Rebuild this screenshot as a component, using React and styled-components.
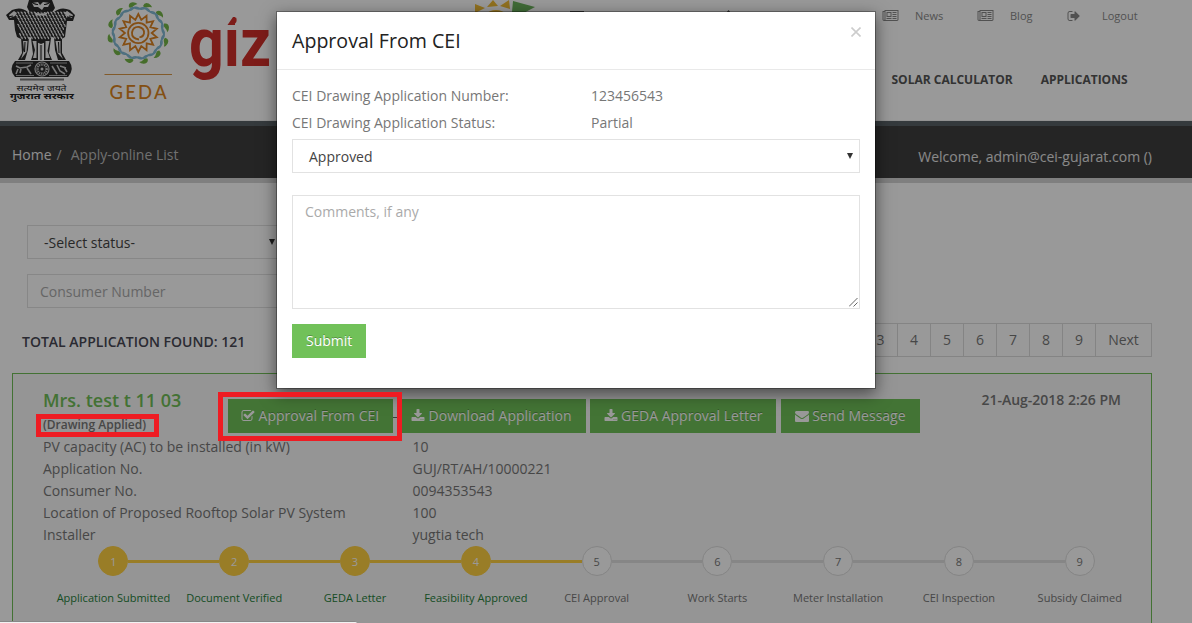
import React from "react";
import styled, { createGlobalStyle } from "styled-components";

const GlobalStyle = createGlobalStyle`
  * { box-sizing: border-box; }
  html, body { margin: 0; padding: 0; height: 100%; overflow: hidden; }
  body { font: 14px/22px "Open Sans", "Noto Sans", sans-serif; color: #777; background: #fff; }
`;

const ICONS = {
  download: ["0 0 1792 1792", "M1344 1344q0-26-19-45t-45-19-45 19-19 45 19 45 45 19 45-19 19-45zm256 0q0-26-19-45t-45-19-45 19-19 45 19 45 45 19 45-19 19-45zm128-224v320q0 40-28 68t-68 28h-1472q-40 0-68-28t-28-68v-320q0-40 28-68t68-28h465l135 136q58 56 136 56t136-56l136-136h464q40 0 68 28t28 68zm-325-569q17 41-14 70l-448 448q-18 19-45 19t-45-19l-448-448q-31-29-14-70 17-39 59-39h256v-448q0-26 19-45t45-19h256q26 0 45 19t19 45v448h256q42 0 59 39z"],
  check: ["0 0 1792 1792", "M1472 930v318q0 119-84.5 203.5t-203.5 84.5h-832q-119 0-203.5-84.5t-84.5-203.5v-832q0-119 84.5-203.5t203.5-84.5h832q63 0 117 25 15 7 18 23 3 17-9 29l-49 49q-10 10-23 10-3 0-9-2-23-6-45-6h-832q-66 0-113 47t-47 113v832q0 66 47 113t113 47h832q66 0 113-47t47-113v-254q0-13 9-22l64-64q10-10 23-10 6 0 12 3 20 8 20 29zm231-489l-814 814q-24 24-57 24t-57-24l-430-430q-24-24-24-57t24-57l110-110q24-24 57-24t57 24l263 263 647-647q24-24 57-24t57 24l110 110q24 24 24 57t-24 57z"],
  envelope: ["0 0 1792 1792", "M1792 710v794q0 66-47 113t-113 47h-1472q-66 0-113-47t-47-113v-794q44 49 101 87 362 246 497 345 57 42 92.5 65.5t94.5 48 110 24.5h2q51 0 110-24.5t94.5-48 92.5-65.5q170-123 498-345 57-39 100-87zm0-294q0 79-49 151t-122 123q-376 261-468 325-10 7-42.5 31t-54 38.5-52 32.5-57.5 27-50 9h-2q-23 0-50-9t-57.5-27-52-32.5-54-38.5-42.5-31q-91-64-262-182.5t-205-142.5q-62-42-117-115.5t-55-136.5q0-78 41.5-130t118.5-52h1472q65 0 112.5 47t47.5 113z"],
  signout: ["0 0 1792 1792", "M704 1440q0 4 1 20t.5 26.5-3 23.5-10 19.5-20.5 6.5h-320q-119 0-203.5-84.5t-84.5-203.5v-704q0-119 84.5-203.5t203.5-84.5h320q13 0 22.5 9.5t9.5 22.5q0 4 1 20t.5 26.5-3 23.5-10 19.5-20.5 6.5h-320q-66 0-113 47t-47 113v704q0 66 47 113t113 47h312l11.5 1 11.5 3 8 5.5 7 9 2 13.5zm928-544q0 26-19 45l-544 544q-19 19-45 19t-45-19-19-45v-288h-448q-26 0-45-19t-19-45v-384q0-26 19-45t45-19h448v-288q0-26 19-45t45-19 45 19l544 544q19 19 19 45z"],
  news: ["0 0 2048 1792", "M1024 512h-384v384h384v-384zm128 640v128h-640v-128h640zm0-768v640h-640v-640h640zm640 768v128h-512v-128h512zm0-256v128h-512v-128h512zm0-256v128h-512v-128h512zm0-256v128h-512v-128h512zm-1536 960v-960h-128v960q0 26 19 45t45 19 45-19 19-45zm1664 0v-1088h-1536v1088q0 33-11 64h1483q26 0 45-19t19-45zm128-1216v1216q0 80-56 136t-136 56h-1664q-80 0-136-56t-56-136v-1088h256v-128h1792z"],
};

const IconSvg = styled.svg`
  display: block;
  flex: none;
  fill: currentColor;
`;
function Icon({ name, width = 14, height = 14 }) {
  const [box, d] = ICONS[name];
  return (
    <IconSvg viewBox={box} width={width} height={height}>
      <path d={d} />
    </IconSvg>
  );
}

const Page = styled.div`
  position: relative;
  width: 1192px;
  height: 623px;
  overflow: hidden;
  background: #fff;
`;
const Header = styled.header`
  display: flex;
  justify-content: space-between;
  height: 121px;
  border-bottom: 1px solid #f3f3f3;
`;
const Logos = styled.div`
  display: flex;
  align-items: flex-start;
`;
const LogoSvg = styled.svg`
  display: block;
  flex: none;
`;
const GedaSvg = styled(LogoSvg)`
  margin-left: 15px;
`;
const SunLogo = styled(LogoSvg)`
  margin-left: 185px;
`;
const HeaderNav = styled.div`
  display: flex;
  flex-direction: column;
  width: 310px;
`;
const TopLinks = styled.div`
  display: flex;
  height: 32px;
  font-size: 11px;
  line-height: 32px;
  color: #888;
`;
const TopLink = styled.a`
  display: flex;
  align-items: center;
  gap: ${(p) => p.$gap}px;
  width: ${(p) => p.$width}px;
`;
const MainLinks = styled.nav`
  display: flex;
  gap: 28px;
  padding: 37px 0 0 9.5px;
  font-size: 12px;
  font-weight: 700;
  color: #555;
`;
const Breadcrumb = styled.div`
  display: flex;
  justify-content: space-between;
  height: 62px;
  padding: 18px 40px 0 12px;
  background: #3f3f3f;
  border-top: 5px solid #596166;
  border-bottom: 5px solid #d4d4d4;
  color: #bbb;
`;
const Crumbs = styled.div`
  display: flex;
`;
const Crumb = styled.span`
  color: ${(p) => (p.$active ? "#ececec" : "#bcbcbc")};
  margin-right: ${(p) => p.$space || 0}px;
`;
const Welcome = styled.div`
  color: #e4e4e4;
  margin-top: 2px;
`;
const Filters = styled.div`
  display: flex;
  flex-direction: column;
  gap: 15px;
  padding: 42px 0 0 27px;
`;
const Field = styled.div`
  display: flex;
  align-items: center;
  justify-content: space-between;
  width: ${(p) => p.$width || "261px"};
  height: 34px;
  padding: 2px ${(p) => p.$right || 12}px 0 ${(p) => p.$left || 12}px;
  border: 1px solid #e2e2e2;
  background: #fff;
  color: ${(p) => (p.$muted ? "#aaa" : "#444")};
`;
const Caret = styled.span`
  width: 0;
  height: 0;
  margin-top: -3px;
  border: 3px solid transparent;
  border-top: 6px solid #333;
  border-bottom: 0;
`;
const ListHead = styled.div`
  display: flex;
  justify-content: space-between;
  height: 34px;
  margin: 15px 40px 16px 22px;
`;
const Total = styled.div`
  font-weight: 600;
  font-size: 14px;
  line-height: 38px;
  color: #484854;
`;
const Pagination = styled.div`
  display: flex;
  border: 1px solid #ddd;
`;
const PageLink = styled.a`
  width: ${(p) => (p.$wide ? 56 : 33)}px;
  border-left: ${(p) => (p.$first ? 0 : 1)}px solid #ddd;
  text-align: center;
  line-height: 32px;
`;
const Card = styled.section`
  height: 280px;
  margin: 0 40px 0 12px;
  padding: 15px 30px 0;
  border: 1px solid #71bf57;
  background: #f8f8f8;
`;
const CardTop = styled.div`
  display: flex;
  height: 47px;
`;
const Applicant = styled.div`
  width: 185px;
`;
const Name = styled.div`
  font-size: 18px;
  font-weight: 600;
  line-height: 22px;
  color: #71bf57;
`;
const Stage = styled.div`
  font-size: 12px;
  font-weight: 600;
  line-height: 28px;
`;
const Actions = styled.div`
  display: flex;
  gap: 4px;
  padding-top: 10px;
`;
const Button = styled.button`
  display: flex;
  align-items: center;
  gap: 3.6px;
  flex: none;
  width: ${(p) => p.$width}px;
  height: 34px;
  padding: 0 0 0 ${(p) => p.$pad || 13}px;
  margin: 0 0 0 ${(p) => p.$shift || 0}px;
  border: 0;
  background: #71c159;
  color: #fff;
  font: 14px/34px "Open Sans", sans-serif;
  text-shadow: 0 -1px 0 rgba(0, 0, 0, 0.25);
  white-space: nowrap;
`;
const LinkDash = styled.span`
  width: 4px;
  height: 1px;
  margin: 18px -4px 0;
  background: #666;
`;
const DateText = styled.div`
  margin-left: auto;
  font-weight: 600;
  line-height: 22px;
`;
const Details = styled.dl`
  display: grid;
  grid-template-columns: 369.5px 1fr;
  grid-auto-rows: 22px;
  margin: 0;
`;
const Detail = styled.dd`
  margin: 0;
`;
const Steps = styled.ol`
  display: grid;
  grid-template-columns: repeat(9, 120.8px);
  margin: 0 0 0 10px;
  padding: 0;
  list-style: none;
`;
const Step = styled.li`
  display: flex;
  flex-direction: column;
  align-items: center;
  font-size: 11px;
  color: ${(p) => (p.$done ? "#26803a" : "#777")};
`;
const Track = styled.div`
  display: grid;
  grid-template-columns: 1fr 30px 1fr;
  align-items: center;
  width: 100%;
  height: 30px;
`;
const Rail = styled.span`
  height: 3px;
  background: ${(p) => (p.$none ? "transparent" : p.$done ? "#ffd042" : "#dfdfdf")};
`;
const Dot = styled.span`
  width: 30px;
  height: 30px;
  border-radius: 50%;
  border: 1px solid ${(p) => (p.$done ? "#ffd042" : "#ddd")};
  background: ${(p) => (p.$done ? "#ffd042" : "#fff")};
  color: ${(p) => (p.$done ? "#fff" : "#777")};
  text-align: center;
  line-height: ${(p) => (p.$done ? 29 : 30)}px;
`;
const StepLabel = styled.span`
  margin-top: 11px;
  line-height: 22px;
  white-space: nowrap;
`;
const Backdrop = styled.div`
  position: absolute;
  inset: 0;
  background: rgba(0, 0, 0, 0.4);
`;
const Modal = styled.div`
  position: absolute;
  left: 276px;
  top: 11px;
  width: 600px;
  height: 378px;
  border: 1px solid rgba(0, 0, 0, 0.3);
  background: #fff;
  background-clip: padding-box;
  box-shadow: 0 5px 15px rgba(0, 0, 0, 0.5);
`;
const ModalHead = styled.div`
  display: flex;
  justify-content: space-between;
  height: 58px;
  padding: 15px 14.5px 0 15px;
  border-bottom: 1px solid #e9e9e9;
`;
const Title = styled.h4`
  margin: 0;
  font-size: 19.6px;
  font-weight: 400;
  line-height: 28px;
  color: #222;
`;
const CloseIcon = styled.svg`
  display: block;
  margin-top: -0.5px;
  stroke: #ccc;
  stroke-width: 1.6;
`;
const ModalBody = styled.div`
  padding: 12px 15px;
`;
const InfoRow = styled.div`
  display: grid;
  grid-template-columns: 299px 1fr;
  height: 27px;
  line-height: 28px;
`;
const ModalForm = styled.div`
  padding-top: 3px;
`;
const TextArea = styled.div`
  display: flex;
  justify-content: space-between;
  height: 114px;
  margin: 22px 0 15px;
  padding: 5px 1px 1px 12px;
  border: 1px solid #e2e2e2;
  color: #aaa;
`;
const Grip = styled.svg`
  align-self: flex-end;
  stroke: #555;
  stroke-width: 0.9;
`;
const Highlight = styled.div`
  position: absolute;
  left: ${(p) => p.$x}px;
  top: ${(p) => p.$y}px;
  width: ${(p) => p.$w}px;
  height: ${(p) => p.$h}px;
  border: 5px solid #ee1c23;
`;
const StatusBubble = styled.div`
  position: absolute;
  left: 0;
  bottom: 0;
  width: 357px;
  height: 2px;
  background: #f2f2f2;
  border-top: 1px solid #888;
  border-top-right-radius: 2px;
`;

const MANE_CURLS = [];
for (let r = 0; r < 9; r++) {
  for (let c = 0; c < 17; c++) {
    const x = 14 + c * 3.3 + (r % 2) * 1.65;
    const y = 12 + r * 3.1;
    if (Math.abs(x - 40.5) < 26.5 - r * 0.7) MANE_CURLS.push([x, y]);
  }
}

function Emblem() {
  return (
    <LogoSvg width="85" height="105" viewBox="0 0 85 105">
      <g fill="#2b2b2b">
        <path d="M29 0H52L55 8 51 14 54 18H27L30 13 27 7Z" />
        <path d="M28 12Q21 6 12 10L6 15 9 20 14 20 15 30 17 37 23 40 30 37 36 42 41 44 46 42 52 37 60 40 65 37 67 21 73 21 75 15 70 10Q61 6 54 12Z" />
        <path d="M21 37H29L28 50 25 60H18L22 53ZM31 38H38V60H31L33 54ZM44 38H51L49 53 52 60H44ZM54 37H62L62 53 66 60H58L55 50Z" />
        <path d="M15 61H69Q75 69 68 77H15Q8 69 15 61Z" />
      </g>
      <g fill="none" stroke="#f2f2f2" strokeWidth="1.2">
        {MANE_CURLS.map(([x, y]) => (
          <path key={`${x}-${y}`} d={`M${x} ${y}q1.9 .1 1.5 2.4`} />
        ))}
      </g>
      <g fill="#eee">
        <path d="M32 3L38 2 40 5 43 2 50 3 48 7 44 7 42 10 38 7 34 7ZM34 12Q41 15 48 12L46 15.5H36ZM9 15L14 11 17 13 15 16 10 18ZM73 15L67 11 64 13 67 16 72 18Z" />
        <path d="M23 41H27.5L26.5 52 21 59 24 50ZM32.5 41H36.5V58H33L35 50ZM45.5 41H49.5L47.5 51 50 58H45.5ZM55.5 41H60.5L60.5 53 63 59 57.5 53ZM39 45H43V60H39Z" />
      </g>
      <g fill="none" stroke="#222">
        <path d="M31 1Q34 5 38 4.5M51 1Q48 5 44 4.5M34 10Q41 14 48 10M41 45V60M25 42L24.5 52M58.5 42L59 53M8 17L13 16M74 17L69 16" strokeWidth="1.1" />
      </g>
      <g fill="none" stroke="#ccc">
        <path d="M16 63H33M50 63H67M16 75.5H34M49 75.5H67" strokeWidth=".8" />
        <path d="M16 66L20 68 27 67 31 65M18 69L16 74M21 69L20 73M27 68L31 74M52 66L57 74M57 65L60 71 65 74M60 66L66 68M64 67L67 72" strokeWidth="1.6" />
        <circle cx="42" cy="69" r="7" strokeWidth="1.2" />
        <circle cx="42" cy="69" r="4.6" strokeWidth="2.5" strokeDasharray="1 .8" />
      </g>
      <circle cx="42" cy="69" r="1.5" fill="#ddd" />
      <path d="M20 79.5H64" stroke="#777" strokeWidth="2" />
      <g fill="#222" textAnchor="middle" fontFamily="'Noto Sans', 'Noto Sans Devanagari', sans-serif">
        <text x="41.5" y="90.5" fontSize="7.5" textLength="50" lengthAdjust="spacingAndGlyphs">सत्यमेव जयते</text>
        <text x="42" y="98.5" fontSize="8" fontWeight="700" textLength="64" lengthAdjust="spacingAndGlyphs">गुजरात सरकार</text>
      </g>
    </LogoSvg>
  );
}

const ray = (n, outer, inner) =>
  Array.from({ length: n * 2 }, (_, i) => {
    const a = (Math.PI * i) / n - Math.PI / 2;
    const r = i % 2 ? inner : outer;
    return `${(38.3 + r * Math.cos(a)).toFixed(2)},${(33 + r * Math.sin(a)).toFixed(2)}`;
  }).join(" ");

const wave = (phase) =>
  Array.from({ length: 145 }, (_, i) => {
    const a = (Math.PI * i) / 72;
    const r = 25 + 0.9 * Math.sin(a * 14 + phase);
    return `${(38.3 + r * Math.cos(a)).toFixed(2)},${(33 + r * Math.sin(a)).toFixed(2)}`;
  }).join(" ");

function Geda() {
  return (
    <GedaSvg width="90" height="105" viewBox="0 0 90 105">
      <g fill="#76b648">
        {Array.from({ length: 12 }, (_, i) => (
          <path key={i} d="M33.5 6Q33.5 1.4 38 1.8Q41 2.2 42.5 4.2Q39.5 4.4 38 5.8Q35.6 7.6 33.5 6Z" transform={`rotate(${i * 30 - 10} 38.3 33)`} />
        ))}
      </g>
      <g fill="none" stroke="#80b9d4" strokeWidth="1.6">
        <polyline points={wave(0)} />
        <polyline points={wave(1.6)} />
      </g>
      <g fill="none" stroke="#dd8424" strokeWidth="1.8">
        <polygon points={ray(14, 19, 13.4)} />
        <circle cx="38.3" cy="33" r="10.2" />
        <path d="M39 39.5Q31.5 38.5 32 32.5Q33 26.5 39 27Q44.5 28 44 33.5Q43 37.5 39.5 37" strokeWidth="1.8" />
      </g>
      <path d="M4.5 74.5H72" stroke="#d99848" />
      <text x="9.5" y="99.3" fill="#db8420" fontFamily="Lato, sans-serif" fontSize="18.5" textLength="57" fontWeight="500">GEDA</text>
    </GedaSvg>
  );
}

function Giz() {
  return (
    <LogoSvg width="100" height="105" viewBox="0 0 100 105">
      <text x="-1" y="66" fill="#d0302a" fontFamily="Roboto, sans-serif" fontWeight="700" fontSize="69" textLength="82" lengthAdjust="spacingAndGlyphs">giz</text>
      <path d="M33 8H48V15L38 25H33Z" fill="#fff" />
      <path d="M37.5 25L43 17H45V25Z" fill="#d0302a" />
    </LogoSvg>
  );
}

const topLinks = [
  { icon: "news", label: "News", width: 95, gap: 16 },
  { icon: "news", label: "Blog", width: 90, gap: 16 },
  { icon: "signout", label: "Logout", width: 80, gap: 21 },
];
const details = [
  ["PV capacity (AC) to be installed (in kW)", "10"],
  ["Application No.", "GUJ/RT/AH/10000221"],
  ["Consumer No.", "0094353543"],
  ["Location of Proposed Rooftop Solar PV System", "100"],
  ["Installer", "yugtia tech"],
];
const steps = [
  "Application Submitted", "Document Verified", "GEDA Letter", "Feasibility Approved", "CEI Approval",
  "Work Starts", "Meter Installation", "CEI Inspection", "Subsidy Claimed",
];
const DONE = 4;

export default function App() {
  return (
    <Page>
      <GlobalStyle />
      <Header>
        <Logos>
          <Emblem />
          <Geda />
          <Giz />
          <SunLogo width="270" height="30" viewBox="475 0 270 30">
            <g fill="#f2bd35">
              <path d="M475 4L485 8 475 13ZM487 7L493 0 498 6ZM500 6L509 0 510 9Z" />
              <circle cx="496" cy="26" r="16" />
            </g>
            <path d="M513 1L535 7 520 15 512 12Z" fill="#6cb35c" />
            <path d="M570 11H584V14H570ZM726 13L728.5 10 731 13Z" fill="#555" />
          </SunLogo>
        </Logos>
        <HeaderNav>
          <TopLinks>
            {topLinks.map((l) => (
              <TopLink key={l.label} $width={l.width} $gap={l.gap}>
                <Icon name={l.icon} width={l.icon === "news" ? 17 : 14} />
                {l.label}
              </TopLink>
            ))}
          </TopLinks>
          <MainLinks>
            <span>SOLAR CALCULATOR</span>
            <span>APPLICATIONS</span>
          </MainLinks>
        </HeaderNav>
      </Header>

      <Breadcrumb>
        <Crumbs>
          <Crumb $active $space={5}>Home</Crumb>
          <Crumb $space={9}>/</Crumb>
          <Crumb>Apply-online List</Crumb>
        </Crumbs>
        <Welcome>Welcome, admin@cei-gujarat.com ()</Welcome>
      </Breadcrumb>

      <Filters>
        <Field $left={16}>
          -Select status-
          <Caret />
        </Field>
        <Field $muted>Consumer Number</Field>
      </Filters>

      <ListHead>
        <Total>TOTAL APPLICATION FOUND: 121</Total>
        <Pagination>
          {["3", "4", "5", "6", "7", "8", "9"].map((n, i) => (
            <PageLink key={n} $first={i === 0}>{n}</PageLink>
          ))}
          <PageLink $wide>Next</PageLink>
        </Pagination>
      </ListHead>

      <Card>
        <CardTop>
          <Applicant>
            <Name>Mrs. test t 11 03</Name>
            <Stage>(Drawing Applied)</Stage>
          </Applicant>
          <Actions>
            <Button $width={165}><Icon name="check" />Approval From CEI</Button>
            <LinkDash />
            <Button $width={188} $shift={1}><Icon name="download" />Download Application</Button>
            <Button $width={186} $pad={13.5}><Icon name="download" />GEDA Approval Letter</Button>
            <Button $width={139} $shift={1} $pad={13.6}><Icon name="envelope" />Send Message</Button>
          </Actions>
          <DateText>21-Aug-2018 2:26 PM</DateText>
        </CardTop>
        <Details>
          {details.map(([k, v]) => (
            <React.Fragment key={k}>
              <dt>{k}</dt>
              <Detail>{v}</Detail>
            </React.Fragment>
          ))}
        </Details>
        <Steps>
          {steps.map((s, i) => (
            <Step key={s} $done={i < DONE}>
              <Track>
                <Rail $none={i === 0} $done={i <= DONE} />
                <Dot $done={i < DONE}>{i + 1}</Dot>
                <Rail $none={i === steps.length - 1} $done={i < DONE} />
              </Track>
              <StepLabel>{s}</StepLabel>
            </Step>
          ))}
        </Steps>
      </Card>

      <Backdrop />
      <Modal>
        <ModalHead>
          <Title>Approval From CEI</Title>
          <CloseIcon width="10" height="10" viewBox="0 0 10 10">
            <path d="M.5 .5L9.5 9.5M9.5 .5L.5 9.5" />
          </CloseIcon>
        </ModalHead>
        <ModalBody>
          <InfoRow><span>CEI Drawing Application Number:</span><span>123456543</span></InfoRow>
          <InfoRow><span>CEI Drawing Application Status:</span><span>Partial</span></InfoRow>
          <ModalForm>
            <Field $width="100%" $left={16} $right={6}>
              Approved
              <Caret />
            </Field>
            <TextArea>
              Comments, if any
              <Grip width="9" height="9" viewBox="0 0 9 9">
                <path d="M0 8.5L8.5 0M4.5 8.5L8.5 4.5" />
              </Grip>
            </TextArea>
            <Button $width={74} $pad={14}>Submit</Button>
          </ModalForm>
        </ModalBody>
      </Modal>

      <Highlight $x={218} $y={392} $w={184} $h={49} />
      <Highlight $x={36} $y={414} $w={123} $h={23} />
      <StatusBubble />
    </Page>
  );
}
